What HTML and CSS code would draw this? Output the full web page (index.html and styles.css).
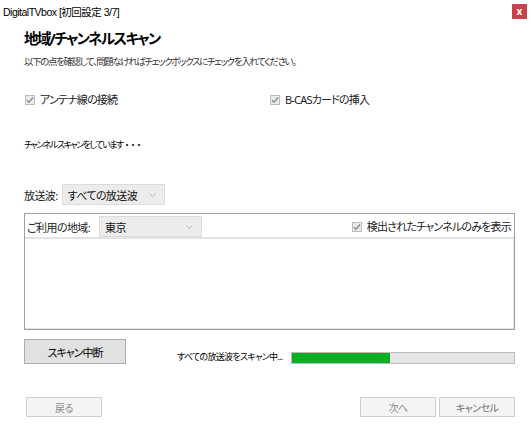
FILE: index.html
```html
<!DOCTYPE html>
<html lang="ja">
<head>
    <meta charset="UTF-8">
    <meta name="viewport" content="width=device-width, initial-scale=1.0">
    <title>DigitalTVbox [初回設定 3/7]</title>
    <link rel="stylesheet" href="styles.css">
</head>
<body>

<div class="window">
    <div class="titlebar">
        <span class="title">DigitalTVbox [初回設定 3/7]</span>
        <span class="close-btn">x</span>
    </div>

    <div class="content">
        <h1>地域/チャンネルスキャン</h1>
        <p class="lead">以下の点を確認して、問題なければチェックボックスにチェックを入れてください。</p>

        <div class="checks">
            <label class="check-item">
                <span class="checkbox"><svg width="8" height="8" viewBox="0 0 8 8"><path d="M1 4.2 L3 6.2 L7 1.5" fill="none" stroke="#8a8a8a" stroke-width="1.3"/></svg></span>
                アンテナ線の接続
            </label>
            <label class="check-item">
                <span class="checkbox"><svg width="8" height="8" viewBox="0 0 8 8"><path d="M1 4.2 L3 6.2 L7 1.5" fill="none" stroke="#8a8a8a" stroke-width="1.3"/></svg></span>
                B-CASカードの挿入
            </label>
        </div>

        <p class="status">チャンネルスキャンをしています<span class="dots">・・・</span></p>

        <div class="field-row">
            <span class="field-label">放送波:</span>
            <div class="select">
                <span>すべての放送波</span>
                <svg class="chevron" width="7" height="4" viewBox="0 0 7 4"><path d="M0.5 0.5 L3.5 3.5 L6.5 0.5" fill="none" stroke="#b5b5b5" stroke-width="1"/></svg>
            </div>
        </div>

        <div class="group">
            <div class="group-head">
                <span class="field-label">ご利用の地域:</span>
                <div class="select">
                    <span>東京</span>
                    <svg class="chevron" width="7" height="4" viewBox="0 0 7 4"><path d="M0.5 0.5 L3.5 3.5 L6.5 0.5" fill="none" stroke="#b5b5b5" stroke-width="1"/></svg>
                </div>
                <label class="check-item push-right">
                    <span class="checkbox"><svg width="8" height="8" viewBox="0 0 8 8"><path d="M1 4.2 L3 6.2 L7 1.5" fill="none" stroke="#8a8a8a" stroke-width="1.3"/></svg></span>
                    検出されたチャンネルのみを表示
                </label>
            </div>
            <div class="channel-list"></div>
        </div>

        <div class="scan-row">
            <button class="btn scan-btn">スキャン中断</button>
            <span class="progress-text">すべての放送波をスキャン中...</span>
            <div class="progress">
                <div class="progress-fill" style="width: 44%"></div>
            </div>
        </div>

        <div class="footer">
            <button class="btn disabled">戻る</button>
            <div class="footer-right">
                <button class="btn disabled">次へ</button>
                <button class="btn disabled cancel">キャンセル</button>
            </div>
        </div>
    </div>
</div>

</body>
</html>
```

FILE: styles.css
```css
body {
    margin: 0;
    padding: 0;
    background-color: #fff;
    font-family: "Noto Sans", "Noto Sans CJK JP", sans-serif;
    font-feature-settings: "palt";
    color: #000;
}

.window {
    width: 531px;
    height: 424px;
    background-color: #fff;
}

.titlebar {
    height: 22px;
    display: flex;
    align-items: center;
    padding-left: 3px;
    padding-right: 4px;
}

.title {
    font-family: "Liberation Sans", "Noto Sans CJK JP", sans-serif;
    font-size: 10.5px;
    letter-spacing: -0.5px;
}

.close-btn {
    margin-left: auto;
    width: 15px;
    height: 15px;
    background-color: #c9414a;
    color: #fff;
    font-size: 10px;
    font-weight: bold;
    line-height: 14px;
    text-align: center;
}

.content {
    padding: 0 16px 0 24px;
}

h1 {
    margin: 6px 0 0 0;
    font-size: 14.5px;
    line-height: 20px;
    font-weight: bold;
    letter-spacing: -1.6px;
}

.lead {
    margin: 7px 0 0 0;
    font-size: 9.5px;
    line-height: 14px;
    color: #333;
    letter-spacing: -1.4px;
}

.checks {
    margin-top: 23px;
    display: grid;
    grid-template-columns: 245px auto;
    height: 16px;
    align-items: center;
}

.check-item {
    display: flex;
    align-items: center;
    font-size: 11px;
    line-height: 16px;
    color: #222;
    letter-spacing: -0.8px;
}

.checkbox {
    width: 10px;
    height: 10px;
    margin: 0 5px 0 1px;
    box-sizing: border-box;
    border: 1px solid #bcbcbc;
    background-color: #eaeaea;
    display: flex;
    align-items: center;
    justify-content: center;
    flex-shrink: 0;
}

.status {
    margin: 30px 0 0 0;
    font-size: 9px;
    line-height: 14px;
    letter-spacing: -1.5px;
}

.dots {
    font-feature-settings: normal;
    letter-spacing: -3px;
}

.field-row {
    margin-top: 32px;
    display: flex;
    align-items: center;
    height: 21px;
}

.field-label {
    font-size: 11px;
    color: #222;
    letter-spacing: -0.6px;
    margin-right: 4px;
}

.select {
    width: 103px;
    height: 21px;
    box-sizing: border-box;
    border: 1px solid #dcdcdc;
    background-color: #ececec;
    display: flex;
    align-items: center;
    padding: 0 8px 0 5px;
    font-size: 11px;
    letter-spacing: -0.6px;
    color: #111;
}

.select .chevron {
    margin-left: auto;
}

.group {
    margin-top: 8px;
    width: 491px;
    height: 117px;
    box-sizing: border-box;
    border: 1px solid #a0a0a0;
    display: flex;
    flex-direction: column;
}

.group-head {
    display: flex;
    align-items: center;
    padding: 2px 3px 0 2px;
    height: 25px;
    box-sizing: border-box;
    border-bottom: 2px solid #e3e3e3;
}

.group-head .field-label {
    width: 68px;
}

.push-right {
    margin-left: auto;
}

.channel-list {
    flex: 1;
    border-right: 1px solid #e3e3e3;
    border-bottom: 1px solid #e3e3e3;
}

.scan-row {
    margin-top: 9px;
    display: flex;
    align-items: flex-end;
    height: 25px;
}

.btn {
    font-family: inherit;
    font-feature-settings: "palt";
    box-sizing: border-box;
    padding: 0;
    cursor: pointer;
}

.scan-btn {
    width: 102px;
    height: 25px;
    background-color: #e1e1e1;
    border: 1px solid #adadad;
    font-size: 11px;
    letter-spacing: -1px;
    color: #000;
}

.progress-text {
    margin-left: 51px;
    font-size: 9px;
    line-height: 12px;
    letter-spacing: -0.7px;
    white-space: nowrap;
    margin-bottom: 1px;
}

.progress {
    margin-left: auto;
    width: 224px;
    height: 12px;
    box-sizing: border-box;
    border: 1px solid #bcbcbc;
    background-color: #e6e6e6;
}

.progress-fill {
    height: 100%;
    background-color: #06b025;
}

.footer {
    margin-top: 33px;
    display: flex;
    padding-left: 2px;
}

.footer-right {
    margin-left: auto;
    display: flex;
    gap: 3px;
}

.btn.disabled {
    width: 76px;
    height: 20px;
    background-color: #f4f4f4;
    border: 1px solid #cfcfcf;
    font-size: 10px;
    letter-spacing: -0.6px;
    color: #8a8a8a;
}

.btn.cancel {
    color: #707070;
}
```
